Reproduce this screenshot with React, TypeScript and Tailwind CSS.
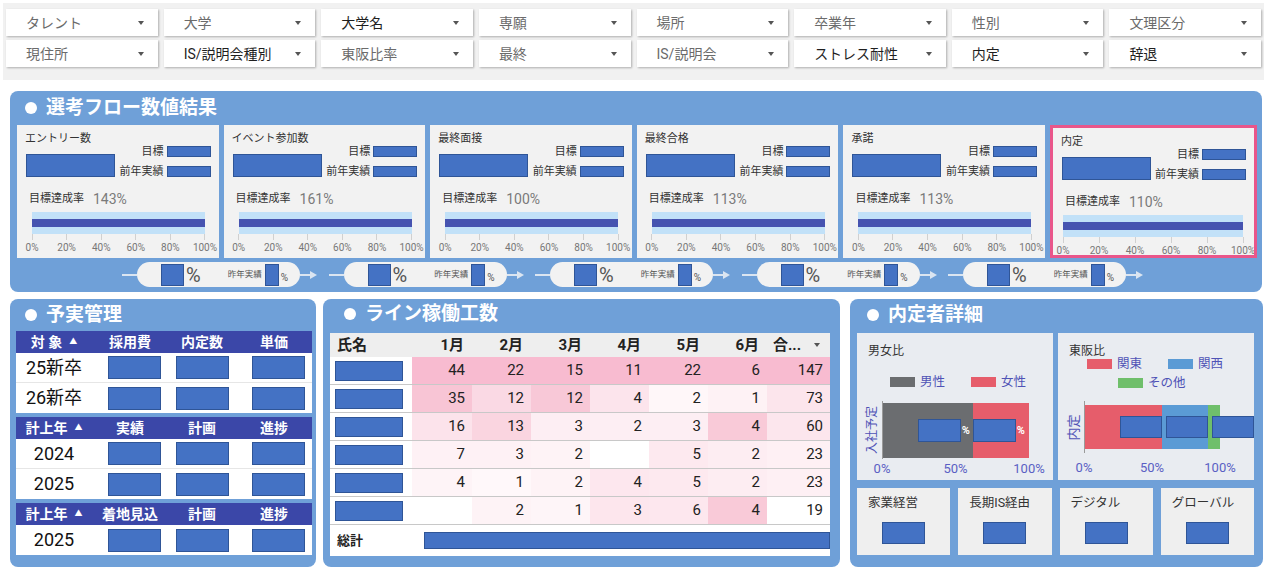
import React from "react";

function Box({ className = "" }: { className?: string }) {
  return <div className={`shrink-0 bg-[#4472c4] border border-[#2f5597] ${className}`} />;
}

function PanelTitle({ children }: { children: React.ReactNode }) {
  return (
    <div className="flex items-center h-[20px] text-white font-bold text-[19px] leading-[20px]">
      <span className="w-[12px] h-[12px] rounded-full bg-white mr-[9px]" />
      {children}
    </div>
  );
}

const filters: [string, boolean][] = [
  ["タレント", false],
  ["大学", false],
  ["大学名", true],
  ["専願", false],
  ["場所", false],
  ["卒業年", false],
  ["性別", false],
  ["文理区分", false],
  ["現住所", false],
  ["IS/説明会種別", true],
  ["東阪比率", false],
  ["最終", false],
  ["IS/説明会", false],
  ["ストレス耐性", true],
  ["内定", true],
  ["辞退", true],
];

function Caret() {
  return (
    <span className="shrink-0 w-0 h-0 border-l-[3px] border-r-[3px] border-t-[4px] border-l-transparent border-r-transparent border-t-[#555]" />
  );
}

function FlowCard({ title, rate, highlight }: { title: string; rate: string; highlight?: boolean }) {
  const labels = ["0%", "20%", "40%", "60%", "80%", "100%"];
  const barPos = highlight ? "ml-[2px] w-[180px]" : "ml-[7px] w-[173px]";
  return (
    <div
      className={`h-[133px] overflow-hidden bg-[#f2f2f2] ${
        highlight ? "border-[3px] border-[#e9568a]" : ""
      }`}
    >
      <div className="px-[8px] pt-[6px]">
        <div className="text-[11px] leading-[16px] text-[#333] whitespace-nowrap">{title}</div>
        <div className="flex justify-between -mt-[1px]">
          <Box className="mt-[8px] ml-[1px] w-[89px] h-[23px]" />
          <div className="flex flex-col items-end gap-[9px]">
            <div className="flex items-center gap-[3px] h-[11px]">
              <span className="text-[11px] leading-[11px] text-[#333] whitespace-nowrap">目標</span>
              <Box className="w-[44px] h-[11px]" />
            </div>
            <div className="flex items-center gap-[3px] h-[11px]">
              <span className="text-[11px] leading-[11px] text-[#333] whitespace-nowrap">前年実績</span>
              <Box className="w-[44px] h-[11px]" />
            </div>
          </div>
        </div>
        <div className="mt-[13px] pl-[4px] flex items-center h-[18px]">
          <span className="text-[11px] leading-[18px] text-[#333] whitespace-nowrap">目標達成率</span>
          <span className="ml-[9px] text-[14px] leading-[18px] text-[#7a7a7a]">{rate}</span>
        </div>
        <div className={`${barPos} mt-[4px] h-[22px] bg-[#c2e1f8] flex items-center`}>
          <div className="w-full h-[8px] bg-[#4653b0]" />
        </div>
        <div className={`${barPos} flex justify-between`}>
          {labels.map((l) => (
            <div key={l} className="w-0 flex flex-col items-center">
              <div className="w-px h-[6px] bg-[#d0d0d0]" />
              <span className="mt-[2px] whitespace-nowrap text-[10px] leading-[12px] text-[#777]">{l}</span>
            </div>
          ))}
        </div>
      </div>
    </div>
  );
}

function Pill() {
  return (
    <div className="w-[206.5px] shrink-0 flex items-center">
      <div className="w-[15px] h-[2px] bg-[#dbe5f1]" />
      <div className="w-[163px] h-[25px] rounded-full bg-[#f2f2f2] flex items-center">
        <Box className="ml-[24px] w-[23px] h-[22px]" />
        <span className="ml-[2px] text-[20px] leading-none text-[#555]">%</span>
        <span className="ml-[27px] text-[8.5px] leading-none text-[#555] whitespace-nowrap">昨年実績</span>
        <Box className="ml-[3px] w-[14px] h-[22px]" />
        <span className="ml-[2px] mt-[6px] text-[10px] leading-none text-[#555]">%</span>
      </div>
      <div className="w-[10px] h-[2px] bg-[#dbe5f1]" />
      <div className="w-0 h-0 border-t-[4px] border-b-[4px] border-t-transparent border-b-transparent border-l-[7px] border-l-[#dbe5f1]" />
    </div>
  );
}

const ycols = "grid grid-cols-[76px_76px_68px_1fr]";

function YTable({ head, rows }: { head: string[]; rows: string[] }) {
  return (
    <div>
      <div className={`${ycols} h-[22px] bg-[#3b47a8] items-center text-white font-bold text-[14px] leading-none`}>
        {head.map((h, i) => (
          <div key={i} className="flex items-center justify-center whitespace-nowrap">
            {h}
            {i === 0 && <span className="ml-[7px] text-[8px]">▲</span>}
          </div>
        ))}
      </div>
      <div className="bg-white">
        {rows.map((r, i) => (
          <div
            key={i}
            className={`${ycols} h-[30px] items-center ${i < rows.length - 1 ? "border-b border-[#e6e6e6]" : ""}`}
          >
            <div className="text-center text-[18px] leading-none text-[#111]">{r}</div>
            <div className="flex justify-end pr-[7px]">
              <Box className="w-[53px] h-[23px]" />
            </div>
            <div className="flex justify-end pr-[7px]">
              <Box className="w-[53px] h-[23px]" />
            </div>
            <div className="flex justify-end pr-[7px]">
              <Box className="w-[53px] h-[23px]" />
            </div>
          </div>
        ))}
      </div>
    </div>
  );
}

const lcols = "grid grid-cols-[82px_60px_59px_59px_59px_59px_59px_1fr]";

const heat: { v: string[]; c: string[] }[] = [
  {
    v: ["44", "22", "15", "11", "22", "6", "147"],
    c: ["bg-[#f8bbd0]", "bg-[#f8bbd0]", "bg-[#f8bbd0]", "bg-[#f8bbd0]", "bg-[#f8bbd0]", "bg-[#f8bbd0]", "bg-[#f8bbd0]"],
  },
  {
    v: ["35", "12", "12", "4", "2", "1", "73"],
    c: ["bg-[#f8c5d5]", "bg-[#fad9e4]", "bg-[#f8c8d7]", "bg-[#fce4ec]", "bg-[#fff7f9]", "bg-[#fef2f5]", "bg-[#fce5ec]"],
  },
  {
    v: ["16", "13", "3", "2", "3", "4", "60"],
    c: ["bg-[#fce3eb]", "bg-[#fad5e0]", "bg-[#fdeef3]", "bg-[#fdeef3]", "bg-[#fdeef3]", "bg-[#f9cad8]", "bg-[#fce6ed]"],
  },
  {
    v: ["7", "3", "2", "", "5", "2", "23"],
    c: ["bg-[#fef1f5]", "bg-[#fef1f5]", "bg-[#fef3f6]", "bg-white", "bg-[#fde9ef]", "bg-[#fdedf2]", "bg-[#fef0f4]"],
  },
  {
    v: ["4", "1", "2", "4", "5", "2", "23"],
    c: ["bg-[#fef4f7]", "bg-[#fff8fa]", "bg-[#fef3f6]", "bg-[#fde7ee]", "bg-[#fde9ef]", "bg-[#fdedf2]", "bg-[#fef0f4]"],
  },
  {
    v: ["", "2", "1", "3", "6", "4", "19"],
    c: ["bg-white", "bg-[#fef3f6]", "bg-[#fef5f8]", "bg-[#fde6ed]", "bg-[#fde7ee]", "bg-[#f9cad8]", "bg-white"],
  },
];

function Legend({ color, label }: { color: string; label: string }) {
  return (
    <div className="flex items-center">
      <span className={`w-[25px] h-[10px] ${color}`} />
      <span className="ml-[5px] text-[12.5px] leading-[14px] text-[#4f53b6] whitespace-nowrap">{label}</span>
    </div>
  );
}

function AxisLabels({ labels }: { labels: string[] }) {
  return (
    <div className="flex justify-between">
      {labels.map((l) => (
        <div key={l} className="w-0 flex justify-center">
          <span className="whitespace-nowrap text-[13px] leading-[14px] text-[#5a5fc4]">{l}</span>
        </div>
      ))}
    </div>
  );
}

function Pct() {
  return <span className="ml-[1px] text-[11px] leading-none font-bold text-white">%</span>;
}

function SmallCard({ title }: { title: string }) {
  return (
    <div className="h-[67px] bg-[#efefef] pt-[7px]">
      <div className="pl-[11px] text-[12.5px] leading-[16px] text-[#333] whitespace-nowrap">{title}</div>
      <div className="mt-[11px] flex justify-center">
        <Box className="w-[43px] h-[22px]" />
      </div>
    </div>
  );
}

export default function App() {
  return (
    <div className="w-[1267px] h-[570px] overflow-hidden bg-white font-['Roboto','Noto_Sans_CJK_JP',sans-serif]">
      {/* Filter bar */}
      <div className="mx-[3px] mt-[3px] h-[77px] bg-[#f1f1f1] px-[3px] pt-[6px]">
        <div className="grid grid-cols-8 gap-x-[6px] gap-y-[4px]">
          {filters.map(([label, dark]) => (
            <div
              key={label}
              className="h-[27px] bg-white shadow-[1px_1px_2px_rgba(0,0,0,0.28)] flex items-center pl-[20px] pr-[14px]"
            >
              <span
                className={`flex-1 whitespace-nowrap text-[14px] leading-none ${
                  dark ? "text-[#1f1f1f]" : "text-[#6b6b6b]"
                }`}
              >
                {label}
              </span>
              <Caret />
            </div>
          ))}
        </div>
      </div>

      {/* Flow panel */}
      <div className="ml-[10px] mt-[11px] w-[1252px] rounded-[8px] bg-[#6fa0d8] pt-[7px] pb-[5px]">
        <div className="pl-[15px]">
          <PanelTitle>選考フロー数値結果</PanelTitle>
        </div>
        <div className="mt-[7px] pl-[7px] pr-[5px] grid grid-cols-[repeat(5,minmax(0,1fr))_207px] gap-[5px]">
          <FlowCard title="エントリー数" rate="143%" />
          <FlowCard title="イベント参加数" rate="161%" />
          <FlowCard title="最終面接" rate="100%" />
          <FlowCard title="最終合格" rate="113%" />
          <FlowCard title="承諾" rate="113%" />
          <FlowCard title="内定" rate="110%" highlight />
        </div>
        <div className="mt-[4px] pl-[112px] flex">
          <Pill />
          <Pill />
          <Pill />
          <Pill />
          <Pill />
        </div>
      </div>

      {/* Bottom row */}
      <div className="ml-[10px] mt-[7px] flex h-[268px]">
        {/* 予実管理 */}
        <div className="w-[306px] rounded-[8px] bg-[#6fa0d8] pt-[6px] pl-[6px] pr-[4px]">
          <div className="pl-[9px]">
            <PanelTitle>予実管理</PanelTitle>
          </div>
          <div className="mt-[6px] flex flex-col gap-[4px]">
            <YTable head={["対 象", "採用費", "内定数", "単価"]} rows={["25新卒", "26新卒"]} />
            <YTable head={["計上年", "実績", "計画", "進捗"]} rows={["2024", "2025"]} />
            <YTable head={["計上年", "着地見込", "計画", "進捗"]} rows={["2025"]} />
          </div>
        </div>

        {/* ライン稼働工数 */}
        <div className="ml-[7px] w-[517px] rounded-[8px] bg-[#6fa0d8] pt-[5px] pl-[7px] pr-[10px]">
          <div className="pl-[14px]">
            <PanelTitle>ライン稼働工数</PanelTitle>
          </div>
          <div className="mt-[9px] bg-white">
            <div className={`${lcols} h-[24px] bg-[#eeeeee] items-center text-[15px] font-bold leading-none text-[#222]`}>
              <div className="pl-[7px]">氏名</div>
              {["1月", "2月", "3月", "4月", "5月", "6月"].map((m) => (
                <div key={m} className="text-right pr-[8px]">
                  {m}
                </div>
              ))}
              <div className="flex items-center pl-[6px] pr-[10px]">
                <span className="flex-1">合...</span>
                <Caret />
              </div>
            </div>
            {heat.map((r, i) => (
              <div key={i} className={`${lcols} h-[28px] border-b border-[#c8c8c8]`}>
                <div className="flex items-center pl-[5px] bg-white">
                  <Box className="w-[68px] h-[20px]" />
                </div>
                {r.v.map((v, j) => (
                  <div
                    key={j}
                    className={`${r.c[j]} flex items-center justify-end pr-[7px] text-[15px] leading-none text-[#222]`}
                  >
                    {v}
                  </div>
                ))}
              </div>
            ))}
            <div className="h-[31px] flex items-center">
              <span className="pl-[7px] w-[94px] text-[13px] font-bold leading-none text-[#222]">総計</span>
              <Box className="flex-1 h-[17px]" />
            </div>
          </div>
        </div>

        {/* 内定者詳細 */}
        <div className="ml-[10px] w-[413px] rounded-[8px] bg-[#6fa0d8] pt-[6px] pl-[7px] pr-[9px]">
          <div className="pl-[10px]">
            <PanelTitle>内定者詳細</PanelTitle>
          </div>
          <div className="mt-[8px] grid grid-cols-2 gap-[5px]">
            {/* 男女比 */}
            <div className="h-[147px] bg-[#e9ecf1] pt-[10px]">
              <div className="pl-[11px] text-[12px] leading-[16px] text-[#333]">男女比</div>
              <div className="mt-[16px] pl-[33px] flex gap-[26px]">
                <Legend color="bg-[#6b6d70]" label="男性" />
                <Legend color="bg-[#e65d6b]" label="女性" />
              </div>
              <div className="mt-[12px] flex">
                <div className="w-[25px] h-[58px] flex items-center justify-center pl-[4px]">
                  <span className="-rotate-90 whitespace-nowrap text-[12px] leading-none text-[#4f53b6]">入社予定</span>
                </div>
                <div className="w-[147px]">
                  <div className="h-[58px] border-l border-[#9a9a9a] flex items-center">
                    <div className="w-[91px] h-[55px] bg-[#6b6d70] flex items-center justify-end pr-[3px]">
                      <Box className="w-[43px] h-[23px]" />
                      <Pct />
                    </div>
                    <div className="flex-1 h-[55px] bg-[#e65d6b] flex items-center justify-end pr-[4px]">
                      <Box className="w-[43px] h-[23px]" />
                      <Pct />
                    </div>
                  </div>
                  <div className="mt-[3px]">
                    <AxisLabels labels={["0%", "50%", "100%"]} />
                  </div>
                </div>
              </div>
            </div>

            {/* 東阪比 */}
            <div className="h-[147px] bg-[#e9ecf1] pt-[10px]">
              <div className="pl-[11px] text-[12px] leading-[16px] text-[#333]">東阪比</div>
              <div className="-mt-[2px] pl-[29px] flex gap-[26px]">
                <Legend color="bg-[#e65d6b]" label="関東" />
                <Legend color="bg-[#5b9bd5]" label="関西" />
              </div>
              <div className="mt-[5px] pl-[60px] flex">
                <Legend color="bg-[#6fbf6b]" label="その他" />
              </div>
              <div className="mt-[11px] flex">
                <div className="w-[26px] h-[52px] flex items-center justify-center pl-[4px]">
                  <span className="-rotate-90 whitespace-nowrap text-[13px] leading-none text-[#4f53b6]">内定</span>
                </div>
                <div className="w-[136px]">
                  <div className="h-[52px] border-l border-[#9a9a9a] flex items-center">
                    <div className="w-[78px] h-[44px] bg-[#e65d6b] flex items-center justify-end">
                      <Box className="w-[42px] h-[22px]" />
                    </div>
                    <div className="w-[46px] h-[44px] bg-[#5b9bd5] flex items-center justify-end">
                      <Box className="w-[42px] h-[22px]" />
                    </div>
                    <div className="w-[12px] h-[44px] bg-[#6fbf6b] flex items-center">
                      <Box className="ml-[4px] w-[42px] h-[22px]" />
                    </div>
                  </div>
                  <div className="mt-[8px]">
                    <AxisLabels labels={["0%", "50%", "100%"]} />
                  </div>
                </div>
              </div>
            </div>
          </div>
          <div className="mt-[8px] grid grid-cols-4 gap-[8px]">
            <SmallCard title="家業経営" />
            <SmallCard title="長期IS経由" />
            <SmallCard title="デジタル" />
            <SmallCard title="グローバル" />
          </div>
        </div>
      </div>
    </div>
  );
}
